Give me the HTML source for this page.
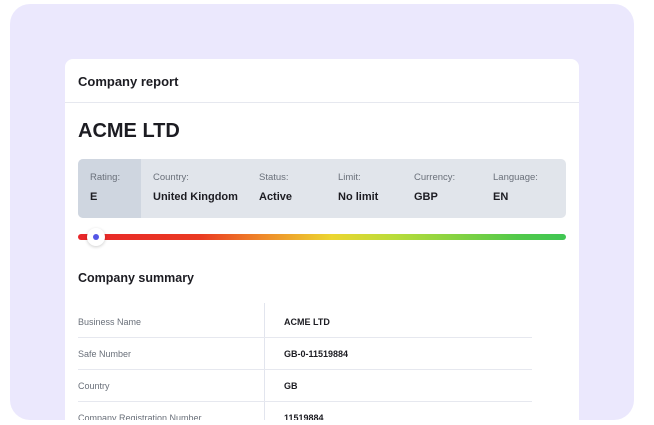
<!DOCTYPE html>
<html><head><style>
*{margin:0;padding:0;box-sizing:border-box}
html,body{width:654px;height:425px;overflow:hidden}
body{background:#fff;position:relative;font-family:"Liberation Sans",sans-serif;color:#1c1c22}
.bg{position:absolute;left:10px;top:4px;width:624px;height:416px;background:#ebe8fd;border-radius:20px}
.card{position:absolute;left:65px;top:59px;width:514px;height:361px;background:#fff;border-radius:8px 8px 0 0;overflow:hidden}
.hdr{position:absolute;left:13px;top:15px;font-size:13px;font-weight:bold}
.div{position:absolute;left:0;right:0;top:43px;height:1px;background:#e6e8ef}
.t{position:absolute;left:13px;top:61px;font-size:20px;font-weight:bold}
.box{position:absolute;left:13px;top:100px;width:488px;height:59px;background:#e1e5eb;border-radius:5px}
.rate{position:absolute;left:0;top:0;width:63px;height:59px;background:#cfd6e0;border-radius:5px 0 0 5px}
.c{position:absolute;top:13px;font-size:9.5px;color:#6a707a}
.c b{display:block;margin-top:8px;font-size:11px;color:#1c1c22}
.bar{position:absolute;left:13px;top:175px;width:488px;height:6px;border-radius:3px;background:linear-gradient(90deg,#e8262a 0%,#ea3a22 25%,#ef8a2a 38%,#ecd630 52%,#b8dc3a 65%,#52c94a 90%,#3fc653 100%)}
.knob{position:absolute;left:22px;top:169px;width:18px;height:18px;border-radius:50%;background:#fff;box-shadow:0 1px 3px rgba(0,0,0,.2)}
.knob:after{content:"";position:absolute;left:6px;top:6px;width:6px;height:6px;border-radius:50%;background:#5456e6}
.sum{position:absolute;left:13px;top:212px;font-size:12.5px;font-weight:bold}
.vl{position:absolute;left:199px;top:244px;width:1px;height:120px;background:#e2e5ee}
.row{position:absolute;left:13px;width:454px;height:32px;font-size:9px}
.row .l{position:absolute;left:0;top:13px;color:#6a707a}
.row .v{position:absolute;left:206px;top:13px;font-weight:bold}
.hl{position:absolute;left:13px;width:454px;height:1px;background:#e6e8ef}
</style></head><body>
<div class="bg"></div>
<div class="card">
<div class="hdr">Company report</div>
<div class="div"></div>
<div class="t">ACME LTD</div>
<div class="box">
<div class="rate"></div>
<div class="c" style="left:12px">Rating:<b>E</b></div>
<div class="c" style="left:75px">Country:<b>United Kingdom</b></div>
<div class="c" style="left:181px">Status:<b>Active</b></div>
<div class="c" style="left:260px">Limit:<b>No limit</b></div>
<div class="c" style="left:336px">Currency:<b>GBP</b></div>
<div class="c" style="left:415px">Language:<b>EN</b></div>
</div>
<div class="bar"></div>
<div class="knob"></div>
<div class="sum">Company summary</div>
<div class="vl"></div>
<div class="row" style="top:245px"><span class="l">Business Name</span><span class="v">ACME LTD</span></div>
<div class="hl" style="top:278px"></div>
<div class="row" style="top:277px"><span class="l">Safe Number</span><span class="v">GB-0-11519884</span></div>
<div class="hl" style="top:310px"></div>
<div class="row" style="top:309px"><span class="l">Country</span><span class="v">GB</span></div>
<div class="hl" style="top:342px"></div>
<div class="row" style="top:341px"><span class="l">Company Registration Number</span><span class="v">11519884</span></div>
</div>
</body></html>
